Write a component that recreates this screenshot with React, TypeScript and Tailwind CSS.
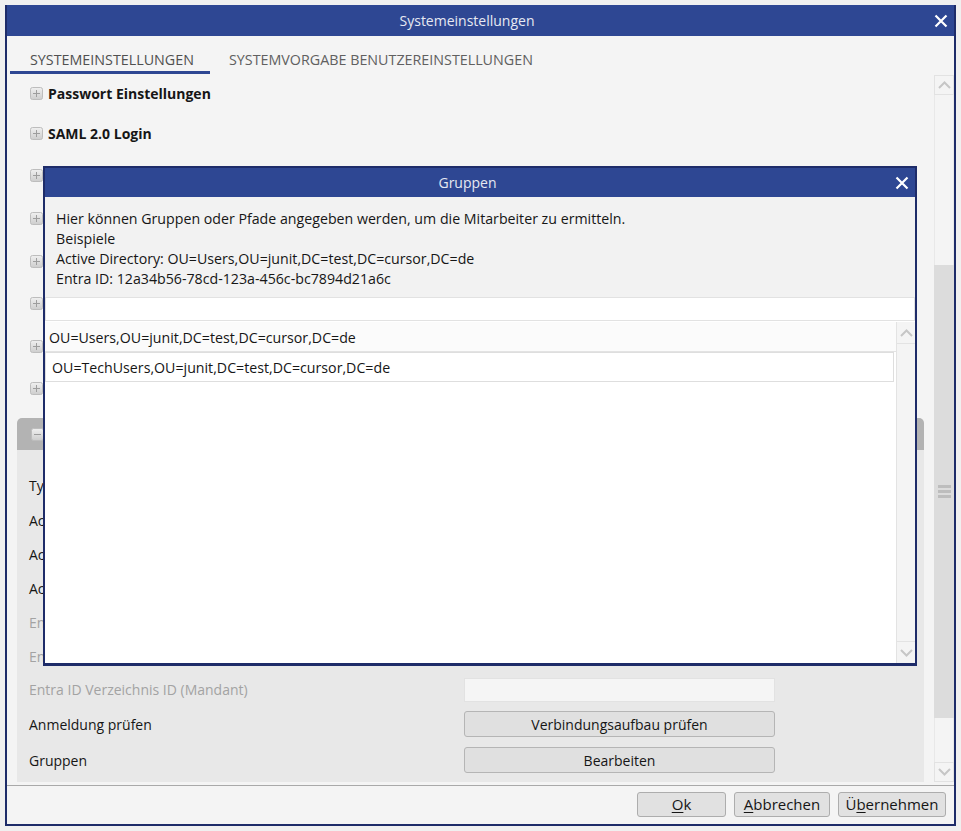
import React from "react";

function PlusIcon({ minus = false }: { minus?: boolean }) {
  const id = minus ? "gm" : "gp";
  return (
    <svg width="13" height="13" viewBox="0 0 13 13" className="shrink-0">
      <defs>
        <linearGradient id={id} x1="0" y1="0" x2="0" y2="1">
          <stop offset="0" stopColor="#f0f0f0" />
          <stop offset="1" stopColor="#cdcdcd" />
        </linearGradient>
      </defs>
      <rect x="0.5" y="0.5" width="12" height="12" rx="2" fill={`url(#${id})`} stroke="#bdbdbd" />
      <path d={minus ? "M3 6.5h7" : "M3 6.5h7M6.5 3v7"} stroke="#9d9d9d" strokeWidth="1" />
    </svg>
  );
}

function Chevron({ up = false }: { up?: boolean }) {
  return (
    <svg width="13" height="8" viewBox="0 0 13 8">
      <path
        d={up ? "M1 7 6.5 1.5 12 7" : "M1 1 6.5 6.5 12 1"}
        fill="none"
        stroke="#c6c6c6"
        strokeWidth="2"
      />
    </svg>
  );
}

function CloseX() {
  return (
    <svg width="14" height="14" viewBox="0 0 14 14">
      <path d="M1.5 1.5l11 11M12.5 1.5l-11 11" stroke="#ffffff" strokeWidth="2.2" />
    </svg>
  );
}

// Titles of sections 3-8 are fully hidden behind the "Gruppen" dialog in the reference.
const collapsed = ["Passwort Einstellungen", "SAML 2.0 Login", "", "", "", "", "", ""];

export default function App() {
  return (
    <div className="h-[831px] w-[961px] bg-[#f0f0f0] pl-[5px] pt-[5px] text-[#161616] [font-family:'Open_Sans',sans-serif]">
      <div className="relative flex h-[821px] w-[951px] flex-col border-x-2 border-b-2 border-[#1e2c69] bg-[#f4f4f4]">
        {/* Title bar */}
        <div className="flex h-[31px] shrink-0 items-center bg-[#2e4793]">
          <div className="flex-1 text-center text-[14px] text-[#e6e9f2]">Systemeinstellungen</div>
          <div className="flex w-[27px] justify-center">
            <CloseX />
          </div>
        </div>

        {/* Tabs */}
        <div className="flex h-[39px] shrink-0 items-start bg-[#f4f4f4]">
          <div className="ml-[3px] h-[38px] w-[200px] border-b-[3px] border-[#2e4793] pl-[20px] pt-[14px] text-[14.3px] leading-[20px] text-[#505050]">
            SYSTEMEINSTELLUNGEN
          </div>
          <div className="ml-[19px] pt-[14px] text-[14.3px] leading-[20px] text-[#606060]">
            SYSTEMVORGABE BENUTZEREINSTELLUNGEN
          </div>
        </div>

        {/* Content */}
        <div className="flex h-[710px] shrink-0">
          <div className="flex flex-1 flex-col overflow-hidden">
            {collapsed.map((t, i) => (
              <div
                key={i}
                className={`flex shrink-0 items-center gap-[5px] pl-[23px] ${i === 0 ? "h-[37px]" : "h-[42.6px]"}`}
              >
                <PlusIcon />
                {t && <span className="text-[14px] font-bold">{t}</span>}
              </div>
            ))}

            <div className="mx-[10px] mt-[8px] flex flex-col">
              <div className="flex h-[32px] items-center gap-[6px] rounded-t-[5px] bg-[#b3b3b3] pl-[14px]">
                <PlusIcon minus />
              </div>
              <div className="flex flex-col bg-[#e8e8e8] pb-[4px] pl-[12px] pt-[17px] text-[14px]">
                <div className="flex h-[36px] items-center">Typ</div>
                <div className="flex h-[34px] items-center">Active Directory Server</div>
                <div className="flex h-[34px] items-center">Active Directory Benutzer</div>
                <div className="flex h-[34px] items-center">Active Directory Passwort</div>
                <div className="flex h-[34px] items-center text-[#a3a3a3]">Entra ID Client ID</div>
                <div className="flex h-[34px] items-center text-[#a3a3a3]">Entra ID Client Secret</div>
                <div className="flex h-[33px] items-center">
                  <span className="w-[435px] text-[#a3a3a3]">Entra ID Verzeichnis ID (Mandant)</span>
                  <div className="h-[24px] w-[311px] border border-[#e2e2e2] bg-[#f5f5f5]" />
                </div>
                <div className="flex h-[36px] items-center">
                  <span className="w-[435px]">Anmeldung prüfen</span>
                  <button className="h-[26px] w-[311px] rounded-[3px] border border-[#b5b5b5] bg-[#e0e0e0] text-[14px]">
                    Verbindungsaufbau prüfen
                  </button>
                </div>
                <div className="flex h-[36px] items-center">
                  <span className="w-[435px]">Gruppen</span>
                  <button className="h-[26px] w-[311px] rounded-[3px] border border-[#b5b5b5] bg-[#e0e0e0] text-[14px]">
                    Bearbeiten
                  </button>
                </div>
              </div>
            </div>
          </div>

          {/* Main scrollbar */}
          <div className="flex w-[20px] flex-col">
            <div className="flex h-[20px] items-center justify-center border border-[#e2e2e2] bg-[#f4f4f4]">
              <Chevron up />
            </div>
            <div className="h-[170px] border-x border-[#e8e8e8] bg-[#f4f4f4]" />
            <div className="flex h-[453px] flex-col items-center justify-center gap-[2px] bg-[#dcdcdc]">
              <div className="h-[3px] w-[13px] bg-[#bdbdbd]" />
              <div className="h-[3px] w-[13px] bg-[#bdbdbd]" />
              <div className="h-[3px] w-[13px] bg-[#bdbdbd]" />
            </div>
            <div className="h-[44px] border-x border-[#e8e8e8] bg-[#f4f4f4]" />
            <div className="flex h-[20px] items-center justify-center border border-[#e2e2e2] bg-[#f4f4f4]">
              <Chevron />
            </div>
          </div>
        </div>

        <div className="h-[1px] shrink-0 bg-[#a9a9a9]" />

        {/* Footer */}
        <div className="flex h-[38px] shrink-0 items-start justify-end gap-[8px] bg-[#f4f4f4] pr-[8px] pt-[6px] text-[15px]">
          <button className="h-[25px] w-[89px] rounded-[3px] border border-[#adadad] bg-[#e1e1e1]">
            <span className="underline underline-offset-2">O</span>k
          </button>
          <button className="h-[25px] w-[96px] rounded-[3px] border border-[#adadad] bg-[#e1e1e1]">
            <span className="underline underline-offset-2">A</span>bbrechen
          </button>
          <button className="h-[25px] w-[108px] rounded-[3px] border border-[#adadad] bg-[#e1e1e1]">
            Ü<span className="underline underline-offset-2">b</span>ernehmen
          </button>
        </div>

        {/* Gruppen dialog (overlay) */}
        <div className="absolute left-[36px] top-[161px] flex h-[500px] w-[874px] flex-col border-x-2 border-b-[3px] border-t-2 border-[#1e2c69] bg-white">
          <div className="flex h-[29px] shrink-0 items-center bg-[#2e4793]">
            <div className="flex-1 pl-[2px] text-center text-[14px] text-[#e6e9f2]">Gruppen</div>
            <div className="flex w-[27px] justify-center">
              <CloseX />
            </div>
          </div>
          <div className="h-[100px] shrink-0 bg-[#f2f2f2] pl-[11px] pt-[12px] text-[14.2px] leading-[20px]">
            <div>Hier können Gruppen oder Pfade angegeben werden, um die Mitarbeiter zu ermitteln.</div>
            <div>Beispiele</div>
            <div>Active Directory: OU=Users,OU=junit,DC=test,DC=cursor,DC=de</div>
            <div>Entra ID: 12a34b56-78cd-123a-456c-bc7894d21a6c</div>
          </div>
          <div className="h-[24px] shrink-0 border border-[#e2e2e2] bg-white" />
          <div className="flex flex-1 pt-[1px]">
            <div className="flex flex-1 flex-col bg-white text-[14.2px]">
              <div className="flex h-[30px] items-center border-b border-[#e3e3e3] bg-[#fbfbfb] pl-[4px] pt-[2px]">
                OU=Users,OU=junit,DC=test,DC=cursor,DC=de
              </div>
              <div className="mr-[2px] flex h-[30px] items-center border border-[#dedede] bg-white pl-[6px] pt-[2px]">
                OU=TechUsers,OU=junit,DC=test,DC=cursor,DC=de
              </div>
            </div>
            <div className="flex w-[19px] flex-col border-l border-[#e3e3e3] bg-[#f4f4f4]">
              <div className="flex h-[22px] items-center justify-center border-b border-[#e3e3e3]">
                <Chevron up />
              </div>
              <div className="flex-1" />
              <div className="flex h-[22px] items-center justify-center border-t border-[#e3e3e3]">
                <Chevron />
              </div>
            </div>
          </div>
        </div>
      </div>
    </div>
  );
}
